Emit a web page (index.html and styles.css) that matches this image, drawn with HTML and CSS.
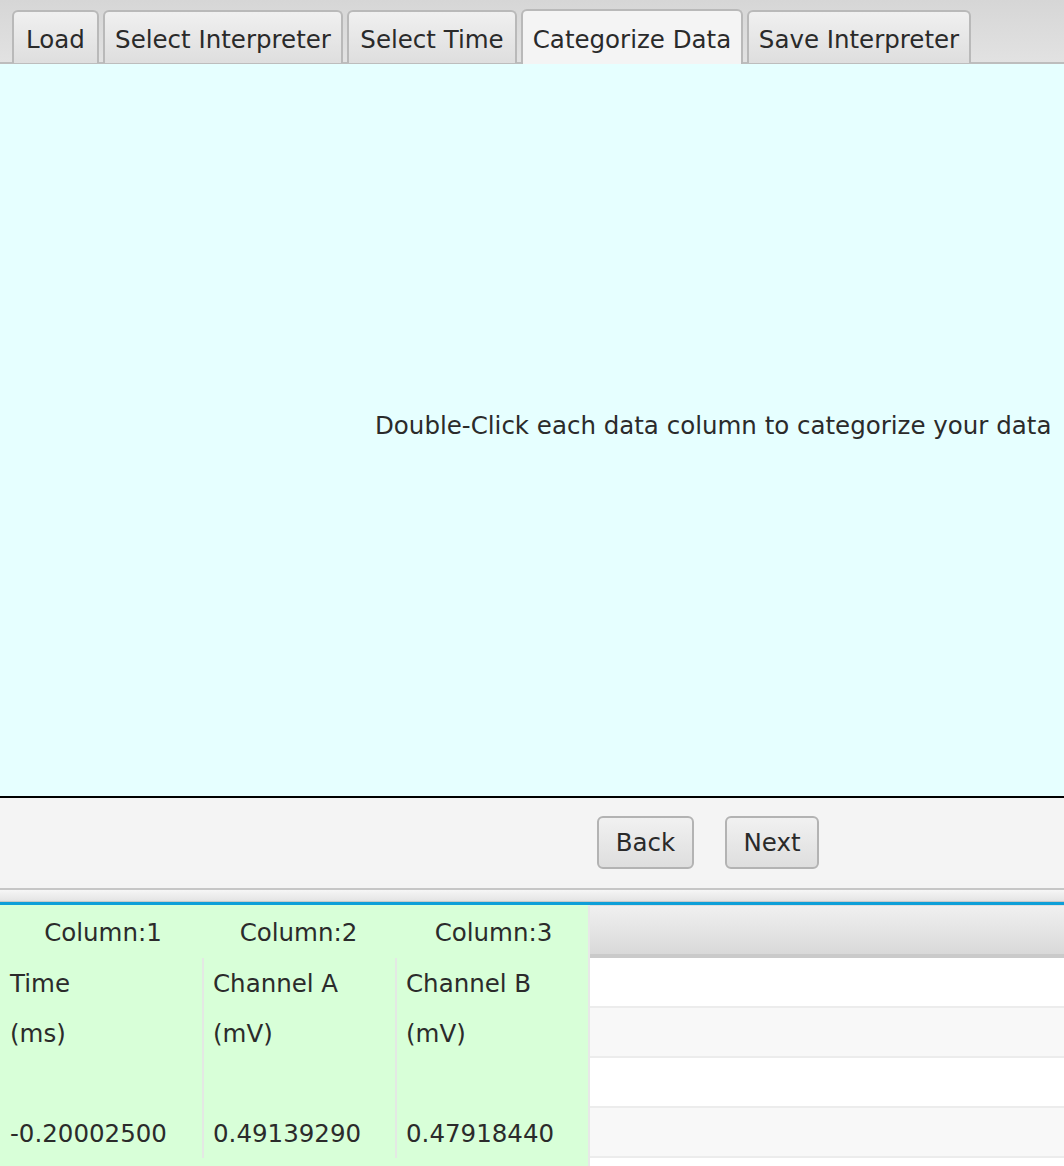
FILE: index.html
```html
<!DOCTYPE html>
<html>
<head>
<meta charset="utf-8">
<link rel="stylesheet" href="styles.css">
</head>
<body>
<div class="app">
  <div class="tabbar">
    <div class="tab t-load">Load</div>
    <div class="tab t-si">Select Interpreter</div>
    <div class="tab t-st">Select Time</div>
    <div class="tab t-cd selected">Categorize Data</div>
    <div class="tab t-sv">Save Interpreter</div>
  </div>
  <div class="content">
    <div class="hint">Double-Click each data column to categorize your data</div>
  </div>
  <div class="divider"></div>
  <div class="buttons">
    <button class="btn btn-back">Back</button>
    <button class="btn btn-next">Next</button>
  </div>
  <div class="sep"></div>
  <div class="table">
    <div class="datacols">
      <div class="col c1">
        <div class="colhead">Column:1</div>
        <div class="cells">
          <div class="cell">Time</div>
          <div class="cell">(ms)</div>
          <div class="cell"></div>
          <div class="cell">-0.20002500</div>
        </div>
      </div>
      <div class="col c2">
        <div class="colhead">Column:2</div>
        <div class="cells">
          <div class="cell">Channel A</div>
          <div class="cell">(mV)</div>
          <div class="cell"></div>
          <div class="cell">0.49139290</div>
        </div>
      </div>
      <div class="col c3">
        <div class="colhead">Column:3</div>
        <div class="cells">
          <div class="cell">Channel B</div>
          <div class="cell">(mV)</div>
          <div class="cell"></div>
          <div class="cell">0.47918440</div>
        </div>
      </div>
    </div>
    <div class="filler">
      <div class="fhead"></div>
      <div class="frow odd"></div>
      <div class="frow even"></div>
      <div class="frow odd"></div>
      <div class="frow even"></div>
      <div class="frow odd"></div>
    </div>
  </div>
</div>
</body>
</html>
```

FILE: styles.css
```css
* { box-sizing: border-box; }
html, body { margin: 0; padding: 0; }
body {
  width: 1064px;
  height: 1166px;
  overflow: hidden;
  font-family: "DejaVu Sans", "Liberation Sans", sans-serif;
  color: #2b2b2b;
  background: #f4f4f4;
}
.app { display: flex; flex-direction: column; height: 1166px; }

.tabbar {
  height: 64px;
  display: flex;
  align-items: flex-end;
  gap: 4px;
  padding-left: 12px;
  background: linear-gradient(#d6d6d6, #e2e2e2);
  border-bottom: 2px solid #bdbdbd;
  flex: none;
}
.tab {
  height: 53px;
  margin-bottom: -1px;
  display: flex;
  align-items: center;
  justify-content: center;
  padding-top: 3px;
  font-size: 24.5px;
  color: #2a2a2a;
  background: linear-gradient(#f0f0f0, #dedede);
  border: 2px solid #b9b9b9;
  border-bottom: none;
  border-radius: 6px 6px 0 0;
  white-space: nowrap;
}
.t-load { width: 87px; }
.t-si { width: 240px; }
.t-st { width: 170px; }
.t-cd { width: 222px; }
.t-sv { width: 224px; }
.tab.selected {
  background: #f4f4f4;
  height: 55px;
  margin-bottom: -2px;
}

.content {
  height: 732px;
  flex: none;
  background: #e6ffff;
  display: flex;
  align-items: center;
  padding-left: 375px;
  padding-bottom: 10px;
}
.hint { font-size: 24.5px; color: #2b2b2b; white-space: nowrap; }

.divider { height: 2px; background: #000; flex: none; }

.buttons {
  height: 90px;
  flex: none;
  background: #f4f4f4;
  display: flex;
  align-items: flex-start;
  padding-top: 18px;
  padding-left: 597px;
  gap: 31px;
}
.btn {
  height: 53px;
  font-family: inherit;
  font-size: 24.5px;
  color: #2a2a2a;
  background: linear-gradient(#f1f1f1, #dedede);
  border: 2px solid #b3b3b3;
  border-radius: 6px;
  padding: 0;
}
.btn-back { width: 97px; }
.btn-next { width: 94px; }

.sep {
  height: 17px;
  flex: none;
  border-top: 2px solid #c6c6c6;
  border-bottom: 3px solid #0e9fd8;
  background: linear-gradient(#f6f6f6 0, #e4e4e4 11px, #c9c9c9 11px, #c9c9c9 12px);
}

.table {
  flex: 1;
  display: flex;
  overflow: hidden;
}
.datacols {
  width: 588px;
  display: flex;
  background: #d8ffd8;
  flex: none;
}
.col { display: flex; flex-direction: column; }
.c1 { width: 202px; }
.c2 { width: 193px; }
.c3 { width: 193px; }
.colhead {
  height: 53px;
  display: flex;
  align-items: center;
  justify-content: center;
  font-size: 24.5px;
  padding-top: 2px;
}
.c1 .colhead { padding-left: 4px; }
.c3 .colhead { padding-left: 4px; }
.cells { display: flex; flex-direction: column; }
.c2 .cells, .c3 .cells { border-left: 2px solid #e4e8e4; }
.cell {
  height: 50px;
  display: flex;
  align-items: center;
  padding-left: 10px;
  font-size: 24.5px;
  white-space: nowrap;
}
.c2 .cell, .c3 .cell { padding-left: 9px; }

.filler { flex: 1; display: flex; flex-direction: column; border-left: 2px solid #e8e8e8; }
.fhead {
  height: 53px;
  flex: none;
  background: linear-gradient(#f0f0f0, #d9d9d9);
  border-bottom: 4px solid #cacaca;
  border-top: 1px solid #e0e0e0;
}
.frow { height: 50px; flex: none; border-bottom: 2px solid #ececec; }
.frow.odd { background: #ffffff; }
.frow.even { background: #f8f8f8; }
```
